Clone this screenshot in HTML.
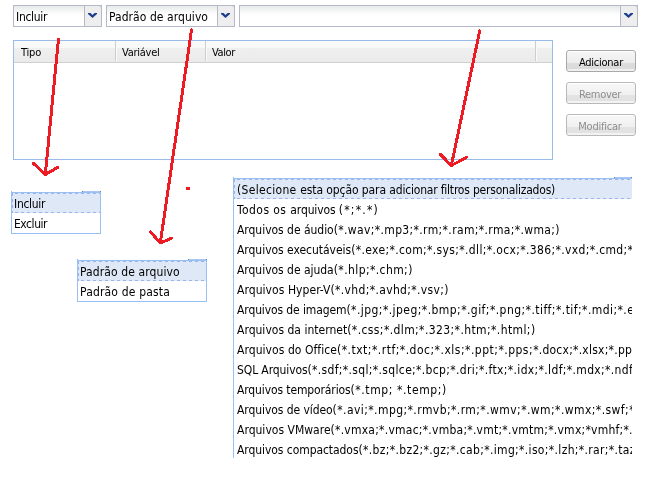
<!DOCTYPE html>
<html lang="pt-BR">
<head>
<meta charset="utf-8">
<title>Filtros</title>
<style>
html,body{margin:0;padding:0;background:#fff;}
body{will-change:transform;}
body{width:649px;height:477px;position:relative;overflow:hidden;font-family:"DejaVu Sans Condensed","DejaVu Sans","Liberation Sans",sans-serif;color:#000;}
.abs{position:absolute;box-sizing:border-box;}
.combo{position:absolute;box-sizing:border-box;height:22px;top:5px;border:1px solid #b5b8c8;background:linear-gradient(#e7eaea 0,#f0f2f2 3px,#fafbfa 7px,#fff 10px);font-size:12px;line-height:20px;white-space:nowrap;}
.combo .txt{position:absolute;left:2px;top:1px;}
.combo .btn{position:absolute;right:-1px;top:-1px;width:18px;height:22px;box-sizing:border-box;border:1px solid #b5b8c8;border-radius:0 3px 0 0;background:#eeeeee;}
.combo .btn svg{position:absolute;left:3px;top:7px;}
.grid{left:13px;top:40px;width:540px;height:120px;border:1px solid #99bbe8;background:#fff;}
.hdr{position:absolute;left:0;top:0;right:0;height:21px;background:linear-gradient(#fafafa 0,#f8f8f8 7px,#efefef 7px,#ebebeb 20px);border-bottom:1px solid #d0d0d0;font-size:11px;}
.hdr span{position:absolute;top:0;height:20px;line-height:23px;box-sizing:border-box;padding-left:7px;border-right:1px solid #cdcdcd;box-shadow:1px 0 0 #fafafa;}
.pbtn{position:absolute;box-sizing:border-box;left:566px;width:70px;height:22px;overflow:hidden;border:1px solid #a9a9a9;border-radius:3px;font-size:11px;line-height:24px;text-align:center;background:linear-gradient(#fff 0,#fff 1px,#f5f5f5 1px,#ececec 12px,#dcdcdc 12px,#dbdbdb 18px,#eeeeee 18px,#f2f2f2 20px);}
.pbtn.dis{color:#8e8e8e;border-color:#b9b9b9;background:linear-gradient(#fff 0,#fff 1px,#f7f7f7 1px,#f0f0f0 12px,#e3e3e3 12px,#e2e2e2 18px,#f1f1f1 18px,#f4f4f4 20px);}
.list{position:absolute;box-sizing:border-box;border:1px solid #98c0f4;background:#fff;font-size:12px;white-space:nowrap;overflow:hidden;}
.list div{box-sizing:border-box;height:20px;line-height:21px;padding-left:2px;border:1px solid transparent;}
.list .n{letter-spacing:-0.03px;}
.list .p{letter-spacing:0.3px;}
.list div.sel{margin-right:-2px;border:1px solid transparent;background-color:#dfe8f6;background-image:repeating-linear-gradient(90deg,transparent 0,transparent 3px,#9bb3e8 3px,#9bb3e8 6px),repeating-linear-gradient(90deg,transparent 0,transparent 3px,#9bb3e8 3px,#9bb3e8 6px),repeating-linear-gradient(180deg,#9bb3e8 0,#9bb3e8 3px,transparent 3px,transparent 6px);background-size:100% 1px,100% 1px,1px 100%;background-position:0 0,0 100%,0 0;background-repeat:no-repeat;background-origin:border-box;background-clip:border-box;}
</style>
</head>
<body>
<div class="combo" style="left:13px;width:89px;"><span class="txt" style="letter-spacing:-0.3px">Incluir</span><span class="btn"><svg width="9" height="5" viewBox="0 0 9 5"><path d="M0 0h2.5l2 2 2-2H9v1L4.5 5 0 1z" fill="#1f3f8c"/></svg></span></div>
<div class="combo" style="left:106px;width:129px;"><span class="txt" style="letter-spacing:0.06px">Padrão de arquivo</span><span class="btn"><svg width="9" height="5" viewBox="0 0 9 5"><path d="M0 0h2.5l2 2 2-2H9v1L4.5 5 0 1z" fill="#1f3f8c"/></svg></span></div>
<div class="combo" style="left:239px;width:399px;"><span class="btn"><svg width="9" height="5" viewBox="0 0 9 5"><path d="M0 0h2.5l2 2 2-2H9v1L4.5 5 0 1z" fill="#1f3f8c"/></svg></span></div>

<div class="abs grid">
  <div class="hdr"><span style="left:0;width:102px;letter-spacing:-0.2px">Tipo</span><span style="left:102px;width:90px;padding-left:6px;letter-spacing:-0.25px">Variável</span><span style="left:192px;width:330px;padding-left:6px;letter-spacing:-0.4px">Valor</span></div>
</div>

<div class="pbtn" style="top:50px;letter-spacing:-0.25px;">Adicionar</div>
<div class="pbtn dis" style="top:82px;letter-spacing:-0.3px;padding-right:2px;">Remover</div>
<div class="pbtn dis" style="top:114px;letter-spacing:-0.23px;padding-right:2px;">Modificar</div>

<div class="list" style="left:11px;top:192px;width:90px;height:42px;"><div class="sel" style="padding-left:1px;letter-spacing:-0.3px">Incluir</div><div style="padding-left:1px;letter-spacing:-0.45px">Excluir</div></div>
<div class="list" style="left:77px;top:260px;width:130px;height:42px;"><div class="sel" style="padding-left:1px;letter-spacing:0.1px">Padrão de arquivo</div><div style="padding-left:1px;letter-spacing:0.17px">Padrão de pasta</div></div>
<div class="abs" style="left:233px;top:178px;width:399px;height:280px;overflow:hidden;"><div class="list" style="left:0;top:0;width:460px;height:300px;">
<div class="sel"><span style="letter-spacing:0.31px">(Selecione </span><span style="letter-spacing:-0.09px">esta opção para </span><span style="letter-spacing:-0.2px">adicionar filtros personalizados)</span></div>
<div><span style="letter-spacing:0.44px">Todos os </span><span style="letter-spacing:-0.12px">arquivos </span><span style="letter-spacing:1.2px">(*;*.*)</span></div>
<div><span style="letter-spacing:-0.03px">Arquivos de áudio</span><span style="letter-spacing:0.36px">(*.wav;*.mp3;*.rm;*.ram;*.rma;*.wma;)</span></div>
<div><span style="letter-spacing:-0.03px">Arquivos executáveis</span><span style="letter-spacing:0.355px">(*.exe;*.com;*.sys;*.dll;*.ocx;*.386;*.vxd;*.cmd;*.bat;)</span></div>
<div><span style="letter-spacing:-0.03px">Arquivos de ajuda</span><span style="letter-spacing:0.41px">(*.hlp;*.chm;)</span></div>
<div><span style="letter-spacing:0.06px">Arquivos Hyper-V</span><span style="letter-spacing:0.34px">(*.vhd;*.avhd;*.vsv;)</span></div>
<div><span style="letter-spacing:-0.11px">Arquivos de imagem</span><span style="letter-spacing:0.44px">(*.jpg;*.jpeg;*.bmp;*.gif;*.png;*.tiff;*.tif;*.mdi;*.eps;)</span></div>
<div><span style="letter-spacing:0.015px">Arquivos da internet</span><span style="letter-spacing:0.4px">(*.css;*.dlm;*.323;*.htm;*.html;)</span></div>
<div><span style="letter-spacing:0.06px">Arquivos do Office</span><span style="letter-spacing:0.49px">(*.txt;*.rtf;*.doc;*.xls;*.ppt;*.pps;</span><span style="letter-spacing:0.24px">*.docx;*.xlsx;*.pptx;)</span></div>
<div><span style="letter-spacing:-0.105px">SQL Arquivos</span><span style="letter-spacing:0.344px">(*.sdf;*.sql;*.sqlce;*.bcp;*.dri;*.ftx;*.idx;*.ldf;*.mdx;*.ndf;)</span></div>
<div><span style="letter-spacing:-0.12px">Arquivos temporários</span><span style="letter-spacing:0.6px">(*.tmp; *.temp;)</span></div>
<div><span style="letter-spacing:-0.07px">Arquivos de vídeo</span><span style="letter-spacing:0.43px">(*.avi;*.mpg;*.rmvb;*.rm;*.wmv;*.wm;*.wmx;*.swf;*.flv;)</span></div>
<div><span style="letter-spacing:0.015px">Arquivos VMware</span><span style="letter-spacing:0.245px">(*.vmxa;*.vmac;*.vmba;*.vmt;*.vmtm;*.vmx;*vmhf;*.vmdk;)</span></div>
<div><span style="letter-spacing:-0.065px">Arquivos compactados</span><span style="letter-spacing:0.34px">(*.bz;*.bz2;*.gz;*.cab;*.img;*.iso;*.lzh;*.rar;*.taz;)</span></div>
</div></div>

<svg class="abs" style="left:0;top:0;" width="649" height="477" viewBox="0 0 649 477">
<g shape-rendering="crispEdges" fill="none" stroke="#ed1c24" stroke-width="3" stroke-linecap="round" stroke-linejoin="round">
<path d="M58.4 39.5L45.3 174.5M33.5 163.5L45.3 174.5L57.5 167.5"/>
<path d="M191.5 30L160.3 243M150.5 232L160.3 243L172 238"/>
<path d="M479.7 31L451.3 165.5M440.5 154.5L451.3 165.5L466.5 157.5"/>
</g>
<rect x="186" y="187" width="4" height="3" fill="#ed1c24"/>
<g shape-rendering="crispEdges">
<rect x="82" y="191" width="19" height="1" fill="#a9c7f3"/><rect x="82" y="191" width="1" height="1" fill="#5f7fb5"/><rect x="100" y="191" width="1" height="1" fill="#5f7fb5"/>
<rect x="188" y="259" width="19" height="1" fill="#a9c7f3"/><rect x="188" y="259" width="1" height="1" fill="#5f7fb5"/><rect x="206" y="259" width="1" height="1" fill="#5f7fb5"/>
<rect x="614" y="177" width="18" height="1" fill="#a9c7f3"/><rect x="614" y="177" width="1" height="1" fill="#5f7fb5"/><rect x="631" y="177" width="1" height="1" fill="#5f7fb5"/>
<rect x="11" y="191" width="1" height="1" fill="#98c0f4"/><rect x="77" y="259" width="1" height="1" fill="#98c0f4"/><rect x="233" y="177" width="1" height="1" fill="#98c0f4"/>
</g>
</svg>
</body>
</html>
